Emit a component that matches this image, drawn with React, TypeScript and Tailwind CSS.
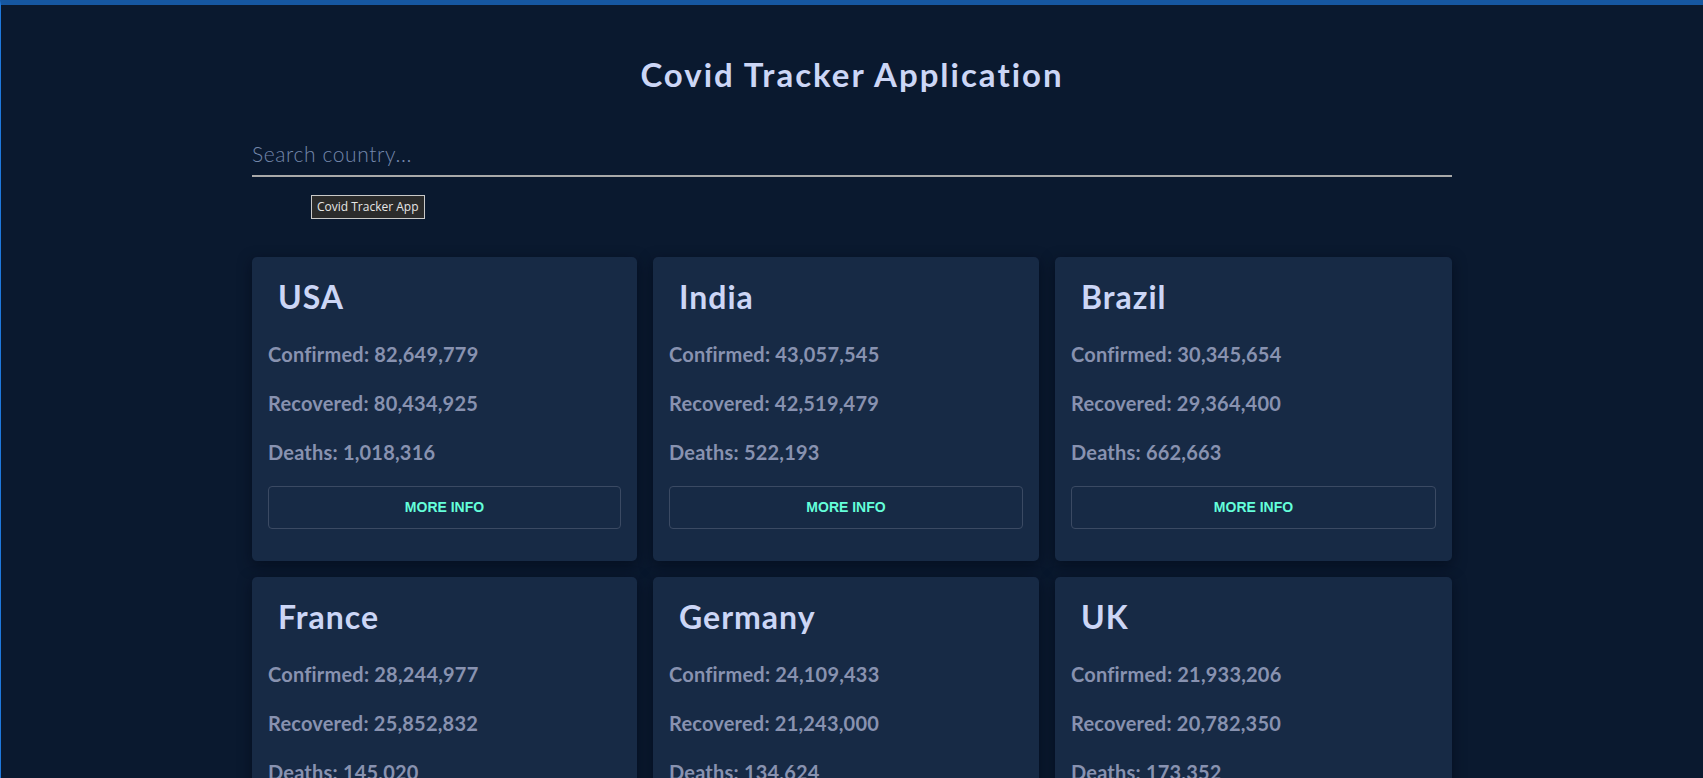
import React from "react";

interface Country {
  name: string;
  confirmed: string;
  recovered: string;
  deaths: string;
}

const countries: Country[] = [
  { name: "USA", confirmed: "82,649,779", recovered: "80,434,925", deaths: "1,018,316" },
  { name: "India", confirmed: "43,057,545", recovered: "42,519,479", deaths: "522,193" },
  { name: "Brazil", confirmed: "30,345,654", recovered: "29,364,400", deaths: "662,663" },
  { name: "France", confirmed: "28,244,977", recovered: "25,852,832", deaths: "145,020" },
  { name: "Germany", confirmed: "24,109,433", recovered: "21,243,000", deaths: "134,624" },
  { name: "UK", confirmed: "21,933,206", recovered: "20,782,350", deaths: "173,352" },
];

function CountryCard({ c }: { c: Country }) {
  return (
    <div className="bg-[#172a45] rounded-[5px] px-4 pt-5 pb-8 shadow-[0_4px_14px_rgba(2,8,20,0.55)]">
      <h2 className="pl-[10px] text-[32px] leading-[40px] font-bold tracking-[1px] text-[#ccd6f6]">{c.name}</h2>
      <div className="mt-[23px] flex flex-col gap-[21px] text-[20px] leading-[28px] font-bold tracking-[0.2px] text-[#8892b0]">
        <p>Confirmed: {c.confirmed}</p>
        <p>Recovered: {c.recovered}</p>
        <p>Deaths: {c.deaths}</p>
      </div>
      <button className="mt-5 w-full h-[43px] rounded-[4px] border border-[#3b4a63] text-[14px] font-bold text-[#64ffda] font-['Liberation_Sans',Arial,sans-serif]">
        MORE INFO
      </button>
    </div>
  );
}

export default function App() {
  return (
    <div className="relative min-h-screen bg-[#0a192f] border-t-[5px] border-t-[#1657a1] border-l border-l-[#1e78dc] font-['Lato',sans-serif]">
      <div className="w-[1200px] mx-auto pt-[49px] pb-10">
        {/* Heading */}
        <h1 className="text-center text-[33px] leading-[40px] font-bold tracking-[2px] text-[#ccd6f6]">
          Covid Tracker Application
        </h1>

        {/* Search */}
        <input
          type="text"
          placeholder="Search country..."
          className="mt-[43px] block w-full h-10 pb-[6px] bg-transparent border-b-2 border-b-[#a9a9a9] text-[21px] font-light tracking-[0.6px] text-[#ccd6f6] placeholder:text-[#7487ab] outline-none"
        />

        {/* Cards */}
        <div className="mt-[80px] grid grid-cols-[385px_386px_397px] gap-4">
          {countries.map((c) => (
            <CountryCard key={c.name} c={c} />
          ))}
        </div>
      </div>

      {/* native title tooltip */}
      <div className="absolute left-[310px] top-[190px] h-6 px-[5px] flex items-center bg-[#2b2b2b] border border-[#c9c9c9] text-[12px] text-[#e6e6e6] font-['Open_Sans',sans-serif]">
        Covid Tracker App
      </div>
    </div>
  );
}
